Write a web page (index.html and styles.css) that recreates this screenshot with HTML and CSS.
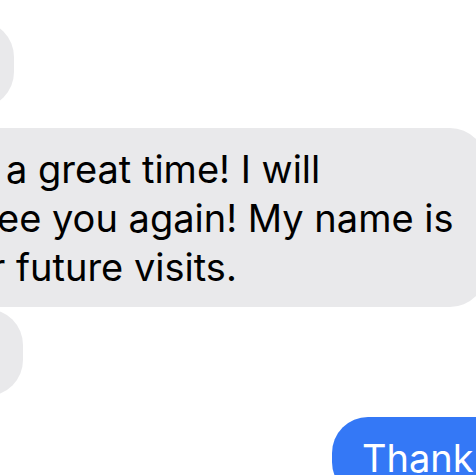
FILE: index.html
```html
<!DOCTYPE html>
<html lang="en">
<head>
  <meta charset="UTF-8" />
  <meta name="viewport" content="width=device-width, initial-scale=1.0"/>
  <title>Messages</title>
  <link rel="stylesheet" href="styles.css">
</head>
<body>

  <div class="thread">
    <div class="bubble received stub stub-top"></div>

    <div class="bubble received long">
      <span class="line line-1">a great time! I will</span>
      <span class="line line-2">ee you again! My name is</span>
      <span class="line line-3">r future visits.</span>
    </div>

    <div class="bubble received stub stub-bottom"></div>

    <div class="bubble sent">
      <span class="line">Thank you!</span>
    </div>
  </div>

</body>
</html>
```

FILE: styles.css
```css
html, body {
  margin: 0;
  padding: 0;
  background: #ffffff;
  overflow: hidden;
}

body {
  font-family: Inter, "Noto Sans", Arial, sans-serif;
  font-size: 38px;
  line-height: 49px;
  color: #000000;
}

.thread {
  display: flex;
  flex-direction: column;
  width: 476px;
  height: 475px;
  padding-top: 21px;
  box-sizing: border-box;
}

.bubble {
  flex-shrink: 0;
  border-radius: 36px;
  white-space: nowrap;
  overflow: hidden;
}

.received {
  background: #e9e9eb;
  align-self: flex-start;
}

.stub {
  width: 200px;
  height: 87px;
}

.stub-top {
  margin-left: -186px;
}

.stub-bottom {
  margin-left: -177px;
  margin-top: 2px;
}

.long {
  display: flex;
  flex-direction: column;
  width: 526px;
  margin-left: -40px;
  margin-top: 20px;
  padding: 17px 0 15px 40px;
  box-sizing: border-box;
}

.line {
  display: block;
}

.line-1 {
  padding-left: 6px;
}

.line-2 {
  text-indent: -3px;
}

.line-3 {
  text-indent: -9px;
}

.sent {
  align-self: flex-start;
  margin-left: 332px;
  margin-top: 21px;
  width: 300px;
  background: #3478f6;
  color: #ffffff;
  padding: 17px 0 15px 30px;
  box-sizing: border-box;
}
```
